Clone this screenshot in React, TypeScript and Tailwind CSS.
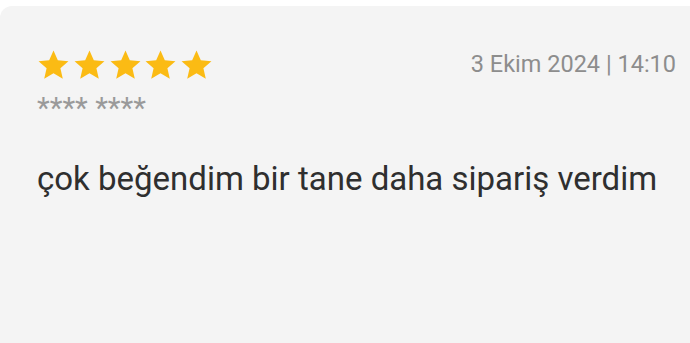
import React from "react";

const Star = () => (
  <svg width="35" height="34" viewBox="0 0 24 24" className="shrink-0">
    <path
      d="M12 1.8l3.05 6.9 7.5.7-5.67 4.98 1.68 7.35L12 17.9l-6.56 3.83 1.68-7.35L1.45 9.4l7.5-.7z"
      fill="#fbbb14"
    />
  </svg>
);

export default function App() {
  return (
    <div className="w-[690px] h-[343px] bg-white pt-[6px] overflow-hidden" style={{ fontFamily: "Roboto, 'Liberation Sans', sans-serif" }}>
      <div className="h-full bg-[#f4f4f4] rounded-tl-[12px] pl-[36px] pr-[14px] pt-[42px]">
        <div className="flex items-start justify-between">
          <div className="flex flex-col">
            <div className="flex gap-[0.75px]">
              <Star />
              <Star />
              <Star />
              <Star />
              <Star />
            </div>
            <div className="mt-[10px] ml-[1px] text-[29.5px] leading-[32px] text-[#9a9a9a]">**** ****</div>
          </div>
          <div className="text-[23.5px] leading-[28px] text-[#8d8d8d] mt-[2px]">3 Ekim 2024 | 14:10</div>
        </div>
        <div className="mt-[35px] ml-[1px] text-[33px] leading-[40px] text-[#2f2f2f]">çok beğendim bir tane daha sipariş verdim</div>
      </div>
    </div>
  );
}
